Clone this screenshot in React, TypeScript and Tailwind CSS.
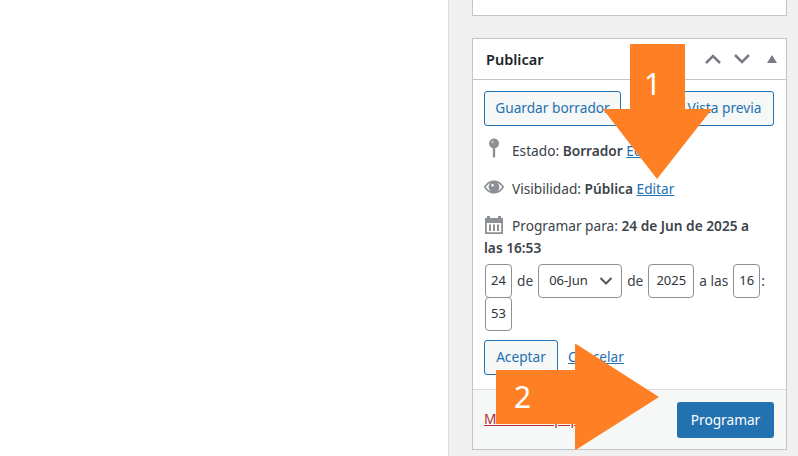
const font = "font-['Noto_Sans',sans-serif]";

const PinIcon = () => (
  <svg width="20" height="22" viewBox="0 0 20 22" className="shrink-0">
    <circle cx="10" cy="5.500" r="5" fill="#8c8f94" />
    <circle cx="8.400" cy="4" r="1.200" fill="#c3c4c7" />
    <path d="M8.800 9h2.400v9.500l-1.200 1.500-1.200-1.500z" fill="#8c8f94" />
  </svg>
);

const EyeIcon = () => (
  <svg width="22" height="16" viewBox="0 0 22 16" className="-ml-[1px] shrink-0">
    <path
      fillRule="evenodd"
      d="M11 1.500c4.400 0 8 2.700 10.200 6.500-2.200 3.800-5.800 6.500-10.200 6.500S3 11.800.8 8C3 4.200 6.600 1.500 11 1.500zM2.800 8c1.200 1.900 3 3.500 5 4.300A5.400 5.400 0 0 1 5.600 8c0-1.800.8-3.200 2.200-4.300-2 .8-3.800 2.400-5 4.300zm11.400-4.300A5.400 5.400 0 0 1 16.400 8c0 1.800-.8 3.300-2.200 4.300 2-.8 3.800-2.400 5-4.300-1.200-1.900-3-3.500-5-4.300z"
      fill="#8c8f94"
    />
    <circle cx="11" cy="8" r="3.800" fill="#8c8f94" />
    <circle cx="9.500" cy="6.300" r="1.200" fill="#fff" />
  </svg>
);

const CalendarIcon = () => (
  <span className="mr-[8px] inline-block align-[-4px]">
    <svg width="20" height="20" viewBox="0 0 20 20" className="shrink-0">
      <path fillRule="evenodd" d="M1 3h2V1h3v2h8V1h3v2h2v16H1zm1.800 5v9.200h14.400V8z" fill="#8c8f94" />
      <path d="M5 9.500h2v6.500H5zM9 9.500h2v6.500H9zM13 9.500h2v6.500h-2z" fill="#8c8f94" />
    </svg>
  </span>
);

const Input = ({ value, className }: { value: string; className: string }) => (
  <span className={`${className} flex h-[34px] items-center justify-center rounded-[4px] border border-[#8c8f94] bg-white text-[13px] text-[#2c3338]`}>
    {value}
  </span>
);

export default function App() {
  return (
    <div className={`${font} relative h-[456px] w-[798px] overflow-hidden bg-white`}>
      <div className="ml-[448px] flex h-full flex-col border-l border-[#dcdcde] bg-[#f0f0f1] pl-[23px] pr-[11px] text-[13.7px] text-[#3c434a]">
        <div className="h-[16px] border border-t-0 border-[#c3c4c7] bg-white" />

        <div className="mt-[22px] flex h-[412px] flex-col border border-[#c3c4c7] bg-white">
          <div className="flex h-[41px] shrink-0 items-center justify-between border-b border-[#c3c4c7] pl-[13px] pr-[9px]">
            <h2 className="pt-[2px] text-[14.500px] font-semibold text-[#1d2327]">Publicar</h2>
            <div className="flex items-center">
              <svg width="18" height="10" viewBox="0 0 18 10" fill="none" stroke="#787c82" strokeWidth="2.500">
                <path d="M2 9l7-7 7 7" />
              </svg>
              <svg width="18" height="10" viewBox="0 0 18 10" fill="none" stroke="#787c82" strokeWidth="2.500" className="ml-[11px]">
                <path d="M2 1l7 7 7-7" />
              </svg>
              <svg width="10" height="8" viewBox="0 0 10 8" className="ml-[16px]">
                <path d="M5 0l5 8H0z" fill="#787c82" />
              </svg>
            </div>
          </div>

          <div className="flex flex-1 flex-col pl-[11px] pr-[12px]">
            <div className="mt-[11px] flex justify-between">
              <button className="h-[35px] w-[137px] rounded-[3px] border border-[#2271b1] bg-[#f6f7f7] text-[#2271b1]">
                Guardar borrador
              </button>
              <button className="h-[35px] w-[99px] rounded-[3px] border border-[#2271b1] bg-[#f6f7f7] text-[#2271b1]">
                Vista previa
              </button>
            </div>

            <div className="mt-[12px] flex h-[22px] items-center gap-[8px] whitespace-nowrap">
              <PinIcon />
              <span className="pt-[4px]">
                Estado: <b className="font-semibold">Borrador</b> <a className="text-[#2271b1] underline">Editar</a>
              </span>
            </div>
            <div className="mt-[16px] flex h-[22px] items-center gap-[7px] whitespace-nowrap">
              <EyeIcon />
              <span className="pt-[4px]">
                Visibilidad: <b className="font-semibold">Pública</b> <a className="text-[#2271b1] underline">Editar</a>
              </span>
            </div>
            <div className="mt-[17px] leading-[22px]">
              <CalendarIcon />
              Programar para: <b className="font-semibold">24 de Jun de 2025 a</b>
              <br />
              <b className="font-semibold">las 16:53</b>
            </div>

            <div className="mt-[5px] flex flex-wrap items-center">
              <Input value="24" className="ml-[1px] w-[27px]" />
              <span className="mx-[5px]">de</span>
              <span className="flex h-[34px] w-[84px] items-center justify-between rounded-[4px] border border-[#8c8f94] pl-[10px] pr-[8px] text-[13px] text-[#2c3338]">
                06-Jun
                <svg width="14" height="8" viewBox="0 0 14 8" fill="none" stroke="#50575e" strokeWidth="2">
                  <path d="M1.500 1l5.500 5.500L12.500 1" />
                </svg>
              </span>
              <span className="mx-[5px]">de</span>
              <Input value="2025" className="w-[46px]" />
              <span className="mx-[5px]">a las</span>
              <Input value="16" className="w-[27px]" />
              <span className="ml-[1px]">:</span>
              <div className="w-full" />
              <Input value="53" className="-mt-[1px] ml-[1px] w-[27px]" />
            </div>

            <div className="mt-[9px] flex items-center gap-[10px]">
              <button className="h-[35px] w-[74px] rounded-[3px] border border-[#2271b1] bg-[#f6f7f7] text-[#2271b1]">
                Aceptar
              </button>
              <a className="text-[#2271b1] underline">Cancelar</a>
            </div>
          </div>

          <div className="flex h-[60px] shrink-0 items-end justify-between border-t border-[#dcdcde] bg-[#f6f7f7] pb-[11px] pl-[11px] pr-[12px]">
            <a className="pb-[8px] text-[#b32d2e] underline">Mover a la papelera</a>
            <button className="h-[36px] w-[97px] rounded-[3px] bg-[#2271b1] text-white">Programar</button>
          </div>
        </div>
      </div>

      {/* annotation arrows drawn over the screenshot */}
      <svg width="110" height="136" viewBox="0 0 110 136" className="absolute left-[603px] top-[44px]">
        <path d="M27 1a1 1 0 0 1 1-1h53a1 1 0 0 1 1 1v64h27L54 135 0 65h27z" fill="#ff8024" />
      </svg>
      <span className="absolute left-[644px] top-[69px] text-[30px] leading-[30px] text-white">1</span>

      <svg width="164" height="106" viewBox="0 0 164 106" className="absolute left-[496px] top-[344px]">
        <path d="M0 26h79V1a1 1 0 0 1 1.500-.8L163 53 80.500 105.500a1 1 0 0 1-1.500-.5V80H0z" fill="#ff8024" />
      </svg>
      <span className="absolute left-[514px] top-[382px] text-[30px] leading-[30px] text-white">2</span>
    </div>
  );
}
